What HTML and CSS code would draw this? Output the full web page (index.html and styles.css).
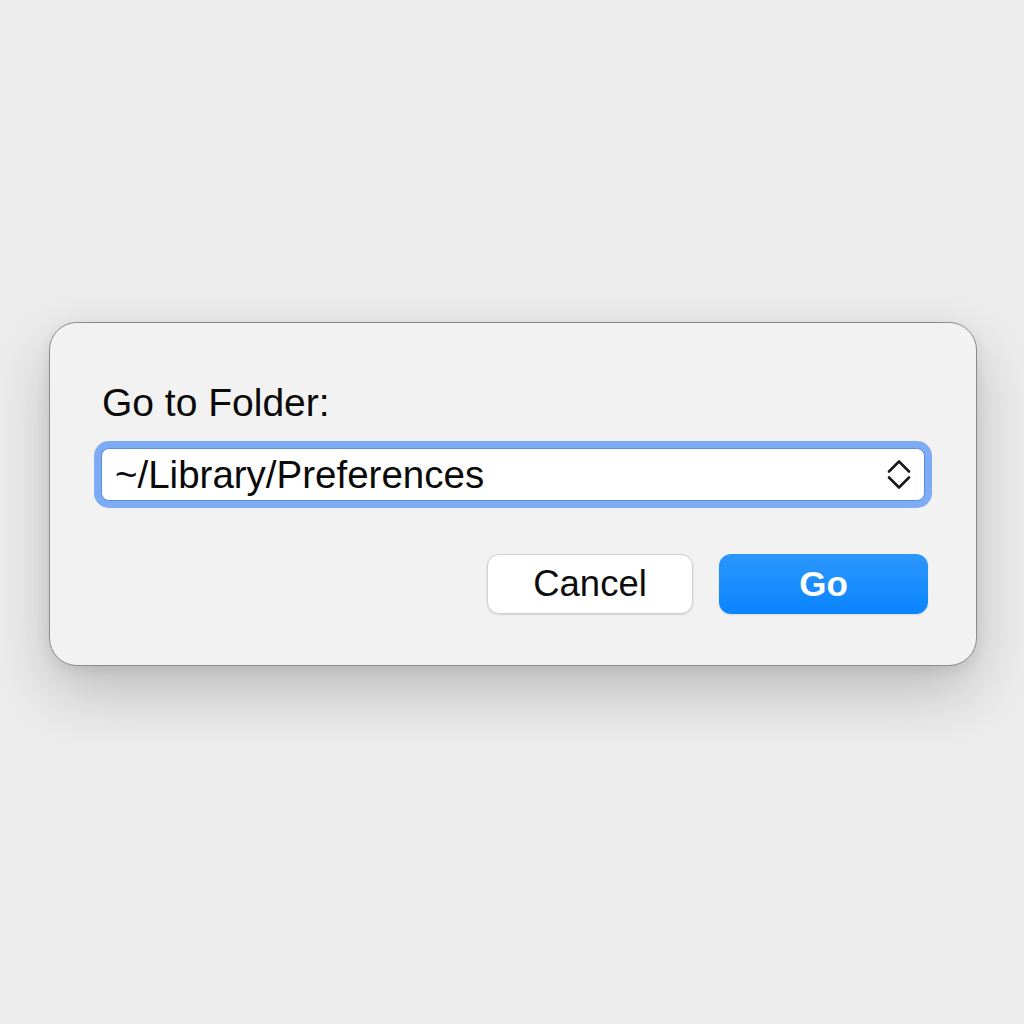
FILE: index.html
```html
<!DOCTYPE html>
<html>
<head>
<meta charset="utf-8">
<link rel="stylesheet" href="styles.css">
</head>
<body>
<div class="dialog">
  <div class="label">Go to Folder:</div>
  <div class="ring">
    <div class="field">
      <span class="path">~/Library/Preferences</span>
      <svg class="chev" width="24" height="31" viewBox="0 0 24 31">
        <path d="M2 12.5 L12 2.5 L22 12.5" fill="none" stroke="#1a1a1a" stroke-width="2.6" stroke-linecap="round" stroke-linejoin="round"/>
        <path d="M2 18.5 L12 28.5 L22 18.5" fill="none" stroke="#1a1a1a" stroke-width="2.6" stroke-linecap="round" stroke-linejoin="round"/>
      </svg>
    </div>
  </div>
  <div class="buttons">
    <div class="btn cancel">Cancel</div>
    <div class="btn go">Go</div>
  </div>
</div>
</body>
</html>
```
FILE: styles.css
```css
html, body {
  margin: 0;
  padding: 0;
}
body {
  width: 1024px;
  height: 1024px;
  background: #ececec;
  font-family: "Liberation Sans", Arial, sans-serif;
  padding-top: 322px;
  box-sizing: border-box;
  display: flex;
  flex-direction: column;
  overflow: hidden;
}
.dialog {
  margin-left: 49px;
  width: 928px;
  box-sizing: border-box;
  background: #f3f2f2;
  border: 1px solid #8a8a8a;
  border-radius: 28px;
  padding: 57px 44px 51px 44px;
  box-shadow: 0 26px 60px rgba(0,0,0,0.20), 0 4px 14px rgba(0,0,0,0.08);
  display: flex;
  flex-direction: column;
}
.label {
  font-size: 39px;
  line-height: 46px;
  color: #0a0a0a;
  margin-left: 8px;
}
.ring {
  margin-top: 15px;
  background: #7eacf4;
  border-radius: 15px;
  padding: 7px;
}
.field {
  background: #ffffff;
  border: 1px solid #5a8ddf;
  border-radius: 8px;
  height: 51px;
  display: flex;
  align-items: center;
  justify-content: space-between;
  padding: 0 13px 0 13px;
}
.path {
  font-size: 38.5px;
  line-height: 51px;
  color: #0a0a0a;
}
.chev {
  display: block;
}
.buttons {
  margin-top: 46px;
  margin-right: 4px;
  display: flex;
  justify-content: flex-end;
  gap: 26px;
}
.btn {
  height: 60px;
  border-radius: 12px;
  display: flex;
  align-items: center;
  justify-content: center;
  box-sizing: border-box;
}
.cancel {
  width: 206px;
  background: #ffffff;
  border: 1px solid #cfcfcf;
  box-shadow: 0 1px 2px rgba(0,0,0,0.12);
  font-size: 36.5px;
  color: #0d0d0d;
}
.go {
  width: 209px;
  background: linear-gradient(#2c97fd, #0a84ff);
  font-size: 35px;
  font-weight: bold;
  color: #ffffff;
  box-shadow: 0 1px 2px rgba(0,0,0,0.10);
}
```
